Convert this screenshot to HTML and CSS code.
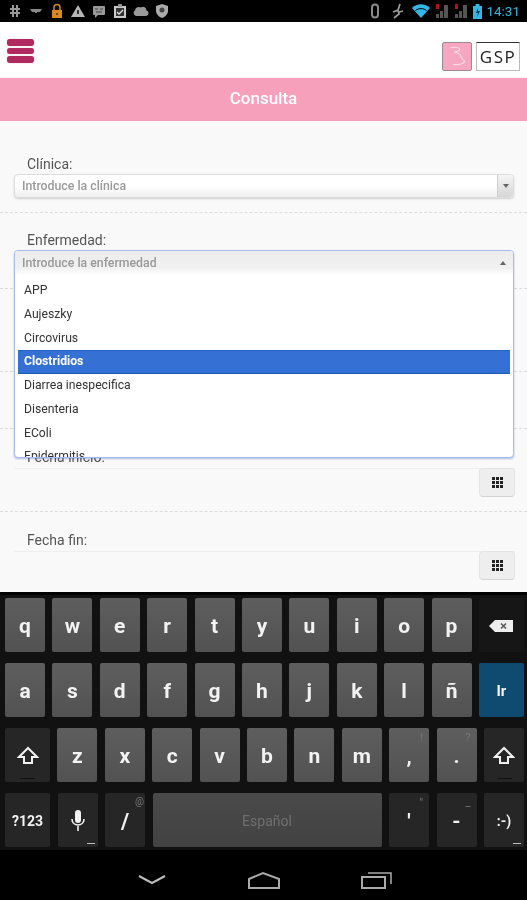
FILE: index.html
```html
<!DOCTYPE html>
<html lang="es">
<head>
  <meta charset="UTF-8">
  <meta name="viewport" content="width=device-width, initial-scale=1.0">
  <title>Consulta</title>
  <link rel="stylesheet" href="styles.css">
</head>
<body>
<div class="page">

  <div class="statusbar">
    <div class="status-left">
      <svg viewBox="0 0 16 16" width="16" height="16"><path d="M6 2v12M10 2v12M3 6h10M3 10h10" stroke="#999" stroke-width="2" fill="none"/></svg>
      <svg viewBox="0 0 16 16" width="16" height="16"><path d="M2 6h12l-2 3H9v1H7V9H4z" fill="#888"/></svg>
      <svg viewBox="0 0 16 16" width="16" height="16"><path d="M5 7V4.500a3 3 0 0 1 6 0V7" stroke="#d9881c" stroke-width="1.500" fill="none"/><rect x="3" y="7" width="10" height="8" fill="#d9881c"/><rect x="7" y="10" width="2" height="2" fill="#6b4410"/></svg>
      <svg viewBox="0 0 16 16" width="16" height="16"><path d="M8 2l7 12H1z" fill="#b5b5b5"/><rect x="7" y="7" width="2" height="4" fill="#333"/></svg>
      <svg viewBox="0 0 16 16" width="16" height="16"><rect x="2" y="3" width="12" height="9" rx="1" fill="#9a9a9a"/><path d="M4 12v3l3-3z" fill="#9a9a9a"/><path d="M4 6h3M9 6h3M5 9h6" stroke="#444" stroke-width="1"/></svg>
      <svg viewBox="0 0 16 16" width="16" height="16"><rect x="2" y="3" width="12" height="12" fill="#c8c8c8"/><rect x="4" y="5" width="8" height="8" fill="#333"/><path d="M5 9l2 2 4-4" stroke="#ddd" stroke-width="1.300" fill="none"/><rect x="6" y="1" width="4" height="3" fill="#999"/></svg>
      <svg viewBox="0 0 16 16" width="16" height="16"><path d="M3 13a3 3 0 0 1-1-5.500A4 4 0 0 1 8 4.500a3.500 3.500 0 0 1 5.500 3A2.800 2.800 0 0 1 13 13z" fill="#999"/></svg>
      <svg viewBox="0 0 16 16" width="16" height="16"><path d="M8 1l6 2v5c0 3-3 6-6 7-3-1-6-4-6-7V3z" fill="#aaa"/><circle cx="8" cy="7" r="2.500" fill="#444"/></svg>
    </div>
    <div class="status-right">
      <svg class="st-bt" viewBox="0 0 8 16" width="8" height="16"><rect x="1" y="1.500" width="6" height="13" rx="3" fill="none" stroke="#8a8a8a" stroke-width="2"/></svg>
      <svg class="st-run" viewBox="0 0 14 16" width="14" height="16"><path d="M10 1L8 7 3 9M8 7l1 4-5 4M9 9l4-1" stroke="#999" stroke-width="1.800" fill="none"/></svg>
      <svg class="st-wifi" viewBox="0 0 18 14" width="18" height="14"><path d="M0 4c5-5 13-5 18 0L9 14z" fill="#33b5e5"/><path d="M3.500 6.500c3-2.500 8-2.500 11 0" stroke="#000" stroke-width="1" fill="none"/></svg>
      <svg viewBox="0 0 14 16" width="14" height="16"><path d="M1 15h3v-4H1zM5 15h3V8H5zM9 15h4V2H9z" fill="#555"/><rect x="1" y="1" width="3" height="5" fill="#b3121d"/></svg>
      <svg viewBox="0 0 14 16" width="14" height="16"><path d="M1 15h3v-4H1zM5 15h3V8H5zM9 15h4V2H9z" fill="#555"/><rect x="1" y="1" width="3" height="5" fill="#b3121d"/></svg>
      <svg viewBox="0 0 9 16" width="9" height="16"><rect x="0" y="3" width="9" height="13" fill="#33b5e5"/><rect x="2.500" y="1" width="4" height="2" fill="#33b5e5"/><path d="M5 5L3 10h2l-1 4 3-6H5z" fill="#0a3a4d"/></svg>
      <span class="clock">14:31</span>
    </div>
  </div>

  <header class="topbar">
    <div class="menu-btn">
      <span></span>
      <span></span>
      <span></span>
    </div>
    <div class="logos">
      <div class="logo-pink">
        <svg viewBox="0 0 30 29" width="28" height="27"><path d="M8 5c5-1 10 0 10 2s-4 2-6 3c4 0 7 3 8 6 1 2 3 2 3 4s-6 4-12 3" stroke="#fbdbe6" stroke-width="1.200" fill="none"/></svg>
      </div>
      <div class="logo-gsp">GSP</div>
    </div>
  </header>

  <div class="titlebar">Consulta</div>

  <main class="content">
    <section class="field">
      <label class="field-label">Clínica:</label>
      <div class="select">
        <span class="select-text">Introduce la clínica</span>
        <span class="select-btn"><i class="caret-down"></i></span>
      </div>
    </section>

    <section class="field">
      <label class="field-label">Enfermedad:</label>
      <div class="select-slot">
        <div class="dropdown">
          <div class="dropdown-head">
            <span class="select-text">Introduce la enfermedad</span>
            <i class="caret-up"></i>
          </div>
          <ul class="dropdown-list">
            <li>APP</li>
            <li>Aujeszky</li>
            <li>Circovirus</li>
            <li class="selected">Clostridios</li>
            <li>Diarrea inespecifica</li>
            <li>Disenteria</li>
            <li>EColi</li>
            <li>Epidermitis</li>
          </ul>
        </div>
      </div>
    </section>

    <section class="field-covered tall"></section>
    <section class="field-covered short"></section>

    <section class="field date-field">
      <label class="field-label">Fecha inicio:</label>
      <div class="date-input">
        <span class="date-btn">
          <svg viewBox="0 0 13 13" width="13" height="13"><path d="M1 1h3v3H1zM5 1h3v3H5zM9 1h3v3H9zM1 5h3v3H1zM5 5h3v3H5zM9 5h3v3H9zM1 9h3v3H1zM5 9h3v3H5zM9 9h3v3H9z" fill="#222"/></svg>
        </span>
      </div>
    </section>

    <section class="field date-field">
      <label class="field-label">Fecha fin:</label>
      <div class="date-input">
        <span class="date-btn">
          <svg viewBox="0 0 13 13" width="13" height="13"><path d="M1 1h3v3H1zM5 1h3v3H5zM9 1h3v3H9zM1 5h3v3H1zM5 5h3v3H5zM9 5h3v3H9zM1 9h3v3H1zM5 9h3v3H5zM9 9h3v3H9z" fill="#222"/></svg>
        </span>
      </div>
    </section>
  </main>

  <div class="keyboard">
    <div class="kb-row">
      <div class="key">q</div>
      <div class="key">w</div>
      <div class="key">e</div>
      <div class="key">r</div>
      <div class="key">t</div>
      <div class="key">y</div>
      <div class="key">u</div>
      <div class="key">i</div>
      <div class="key">o</div>
      <div class="key">p</div>
      <div class="key key-wide key-flat">
        <svg viewBox="0 0 26 14" width="26" height="14"><path d="M7 1h18v12H7L1 7z" fill="#eee"/><path d="M13 4.500l5 5M18 4.500l-5 5" stroke="#555" stroke-width="1.500"/></svg>
      </div>
    </div>
    <div class="kb-row">
      <div class="key">a</div>
      <div class="key">s</div>
      <div class="key">d</div>
      <div class="key">f</div>
      <div class="key">g</div>
      <div class="key">h</div>
      <div class="key">j</div>
      <div class="key">k</div>
      <div class="key">l</div>
      <div class="key">ñ</div>
      <div class="key key-wide key-go">Ir</div>
    </div>
    <div class="kb-row">
      <div class="key key-wide key-dark">
        <svg viewBox="0 0 22 20" width="22" height="20"><path d="M11 2L2 11h5v6h8v-6h5z" fill="none" stroke="#f2f2f2" stroke-width="2"/></svg>
        <i class="key-mark"></i>
      </div>
      <div class="key">z</div>
      <div class="key">x</div>
      <div class="key">c</div>
      <div class="key">v</div>
      <div class="key">b</div>
      <div class="key">n</div>
      <div class="key">m</div>
      <div class="key">,<sup class="key-hint">!</sup></div>
      <div class="key">.<sup class="key-hint">?</sup></div>
      <div class="key key-dark">
        <svg viewBox="0 0 22 20" width="22" height="20"><path d="M11 2L2 11h5v6h8v-6h5z" fill="none" stroke="#f2f2f2" stroke-width="2"/></svg>
        <i class="key-mark key-mark-short"></i>
      </div>
    </div>
    <div class="kb-row">
      <div class="key key-wide key-dark key-small">?123</div>
      <div class="key key-dark">
        <svg viewBox="0 0 16 24" width="16" height="24"><rect x="5" y="1" width="6" height="13" rx="3" fill="#f2f2f2"/><path d="M2 10c0 8 12 8 12 0M8 17v5" stroke="#f2f2f2" stroke-width="1.600" fill="none"/></svg>
        <i class="key-mark key-mark-right"></i>
      </div>
      <div class="key key-dark key-slash">/<sup class="key-hint key-hint-round">@</sup></div>
      <div class="key key-space">Español</div>
      <div class="key key-dark">'<sup class="key-hint">"</sup></div>
      <div class="key key-dark">-<sup class="key-hint">_</sup></div>
      <div class="key key-dark key-small">:-)<i class="key-mark key-mark-right"></i></div>
    </div>
  </div>

  <nav class="navbar">
    <svg viewBox="0 0 28 10" width="28" height="10"><path d="M1 1l13 7 13-7" fill="none" stroke="#bbb" stroke-width="2"/></svg>
    <svg viewBox="0 0 34 18" width="34" height="18"><path d="M2 17V8l14-6 16 6v9z" fill="none" stroke="#aaa" stroke-width="2"/></svg>
    <svg viewBox="0 0 32 18" width="32" height="18"><rect x="1" y="6" width="23" height="11" fill="none" stroke="#aaa" stroke-width="2"/><path d="M7 2h23v11" fill="none" stroke="#aaa" stroke-width="1.500"/></svg>
  </nav>
</div>
</body>
</html>
```

FILE: styles.css
```css
* {
  box-sizing: border-box;
}

body {
  margin: 0;
  font-family: Roboto, sans-serif;
  background: #000;
}

.page {
  width: 527px;
  height: 900px;
  display: flex;
  flex-direction: column;
  overflow: hidden;
  filter: blur(0.4px);
}

/* status bar */
.statusbar {
  height: 22px;
  flex: none;
  background: #000;
  display: flex;
  justify-content: space-between;
  align-items: center;
  padding: 0 7px;
}

.status-left,
.status-right {
  display: flex;
  align-items: center;
  gap: 5px;
}

.st-bt {
  margin-right: 6px;
}

.st-run {
  margin-right: 3px;
}

.clock {
  color: #33b5e5;
  font-size: 13.5px;
  margin-left: -1px;
}

/* header */
.topbar {
  height: 56px;
  flex: none;
  background: #fff;
  display: flex;
  justify-content: space-between;
  padding: 17px 7px 6px 7px;
  border-bottom: 1px solid #f4f4f4;
}

.menu-btn {
  width: 27px;
  display: flex;
  flex-direction: column;
  gap: 2px;
}

.menu-btn span {
  height: 6.500px;
  background: #b02a60;
  border-radius: 3px;
  box-shadow: 0 0 1px #d47a9c;
}

.logos {
  display: flex;
  align-items: flex-end;
  gap: 4px;
}

.logo-pink {
  width: 30px;
  height: 29px;
  background: #f7a6c2;
  border: 1px solid #9a8a90;
  border-radius: 2px;
  display: flex;
  align-items: center;
  justify-content: center;
}

.logo-gsp {
  width: 44px;
  height: 29px;
  background: #fff;
  border: 1px solid #bbb;
  border-top: 1px solid #333;
  font-family: "Open Sans", sans-serif;
  font-size: 17px;
  letter-spacing: 1.5px;
  color: #222;
  display: flex;
  align-items: center;
  justify-content: center;
}

.titlebar {
  height: 43px;
  flex: none;
  background: #f7a0bc;
  color: #fff;
  font-size: 17px;
  font-weight: 500;
  text-align: center;
  line-height: 41px;
}

/* form */
.content {
  height: 471px;
  flex: none;
  position: relative;
  background: #f9f9f9;
  padding-top: 16px;
  overflow: hidden;
}

.field {
  padding: 19px 13px 14px 14px;
  border-bottom: 1px dashed #dcdcdc;
}

.field-label {
  display: block;
  height: 16px;
  line-height: 16px;
  margin: 0 0 2px 13px;
  font-size: 14px;
  color: #555;
}

.select {
  height: 24px;
  display: flex;
  justify-content: space-between;
  background: linear-gradient(#fff, #fff 50%, #eee);
  border: 1px solid #ddd;
  border-radius: 4px;
  box-shadow: 0 1px 2px rgba(0, 0, 0, 0.18);
}

.select-text {
  padding-left: 7px;
  line-height: 23px;
  font-size: 12.3px;
  font-weight: 500;
  color: #999;
}

.select-btn {
  width: 16px;
  background: linear-gradient(#f4f4f4, #d6d6d6);
  border-left: 1px solid #ccc;
  border-radius: 0 4px 4px 0;
  display: flex;
  align-items: center;
  justify-content: center;
}

.caret-down {
  border: 3px solid transparent;
  border-top: 4px solid #666;
  border-bottom: 0;
}

.caret-up {
  border: 3px solid transparent;
  border-bottom: 4px solid #666;
  border-top: 0;
  margin-right: 7px;
}

.select-slot {
  position: relative;
  height: 24px;
}

.dropdown {
  position: absolute;
  top: 0;
  left: 0;
  right: 0;
  height: 208px;
  z-index: 2;
  background: #fff;
  border: 1px solid #a6bcf0;
  border-radius: 4px;
  box-shadow: 0 1px 2px rgba(40, 70, 170, 0.35);
  overflow: hidden;
}

.dropdown-head {
  height: 24px;
  display: flex;
  justify-content: space-between;
  align-items: center;
  background: linear-gradient(#ececec, #f1f1f1 70%, #fff);
}

.dropdown-list {
  list-style: none;
  margin: 4px 0 0;
  padding: 0 3px;
}

.dropdown-list li {
  height: 23.750px;
  line-height: 23.750px;
  padding-left: 6px;
  font-size: 12.2px;
  color: #333;
}

.dropdown-list .selected {
  background: #3570d4;
  border-top: 1px solid #2a62c4;
  border-bottom: 1px solid #1f56b8;
  line-height: 21.750px;
  color: #fff;
  font-weight: 700;
}

.field-covered {
  border-bottom: 1px dashed #dcdcdc;
}

.tall {
  height: 83px;
}

.short {
  height: 57px;
}

.date-field {
  padding-top: 20px;
}

.date-field .field-label {
  margin-bottom: 3px;
}

.date-input {
  height: 29px;
  margin-right: -1px;
  border-top: 1px solid #efefef;
  display: flex;
  justify-content: flex-end;
}

.date-btn {
  width: 36px;
  height: 29px;
  margin-top: -1px;
  background: #eee;
  border: 1px solid #e4e4e4;
  border-bottom: 1px solid #d4d4d4;
  border-radius: 4px;
  display: flex;
  align-items: center;
  justify-content: center;
}

/* keyboard */
.keyboard {
  height: 258px;
  flex: none;
  background: #111;
  border-top: 3px solid #000;
  padding: 3px 3px 0 5px;
  display: flex;
  flex-direction: column;
  gap: 11px;
}

.kb-row {
  display: flex;
  justify-content: space-between;
}

.key {
  position: relative;
  width: 40px;
  height: 54px;
  flex: none;
  background: linear-gradient(#5e5e5e, #525252);
  border-radius: 2px;
  color: #f2f2f2;
  font-size: 21px;
  font-weight: 700;
  display: flex;
  align-items: center;
  justify-content: center;
  padding-top: 2px;
}

.key-wide {
  width: 45px;
}

.key-dark {
  background: #262626;
}

.key-flat {
  background: #161616;
}

.key-go {
  background: #0f4a70;
  font-size: 15px;
}

.key-small {
  font-size: 14px;
}

.key-slash {
  font-size: 22px;
}

.key-space {
  width: 229px;
  background: linear-gradient(#4a4a4a, #424242);
  color: #6f6f6f;
  font-size: 14px;
  font-weight: 400;
}

.key-hint {
  position: absolute;
  top: 3px;
  right: 6px;
  font-size: 11px;
  font-weight: 400;
  line-height: 14px;
  color: #777;
}

.key-hint-round {
  top: 2px;
  right: 1px;
  font-size: 10px;
}

.key-mark {
  position: absolute;
  bottom: 3px;
  left: 15px;
  width: 15px;
  height: 1px;
  background: #111;
}

.key-mark-short {
  left: 13px;
}

.key-mark-right {
  left: auto;
  right: 3px;
  width: 8px;
  background: #bbb;
}

.navbar {
  height: 50px;
  flex: none;
  background: #000;
  display: flex;
  justify-content: space-between;
  align-items: center;
  padding: 10px 134px 0 138px;
}
```
